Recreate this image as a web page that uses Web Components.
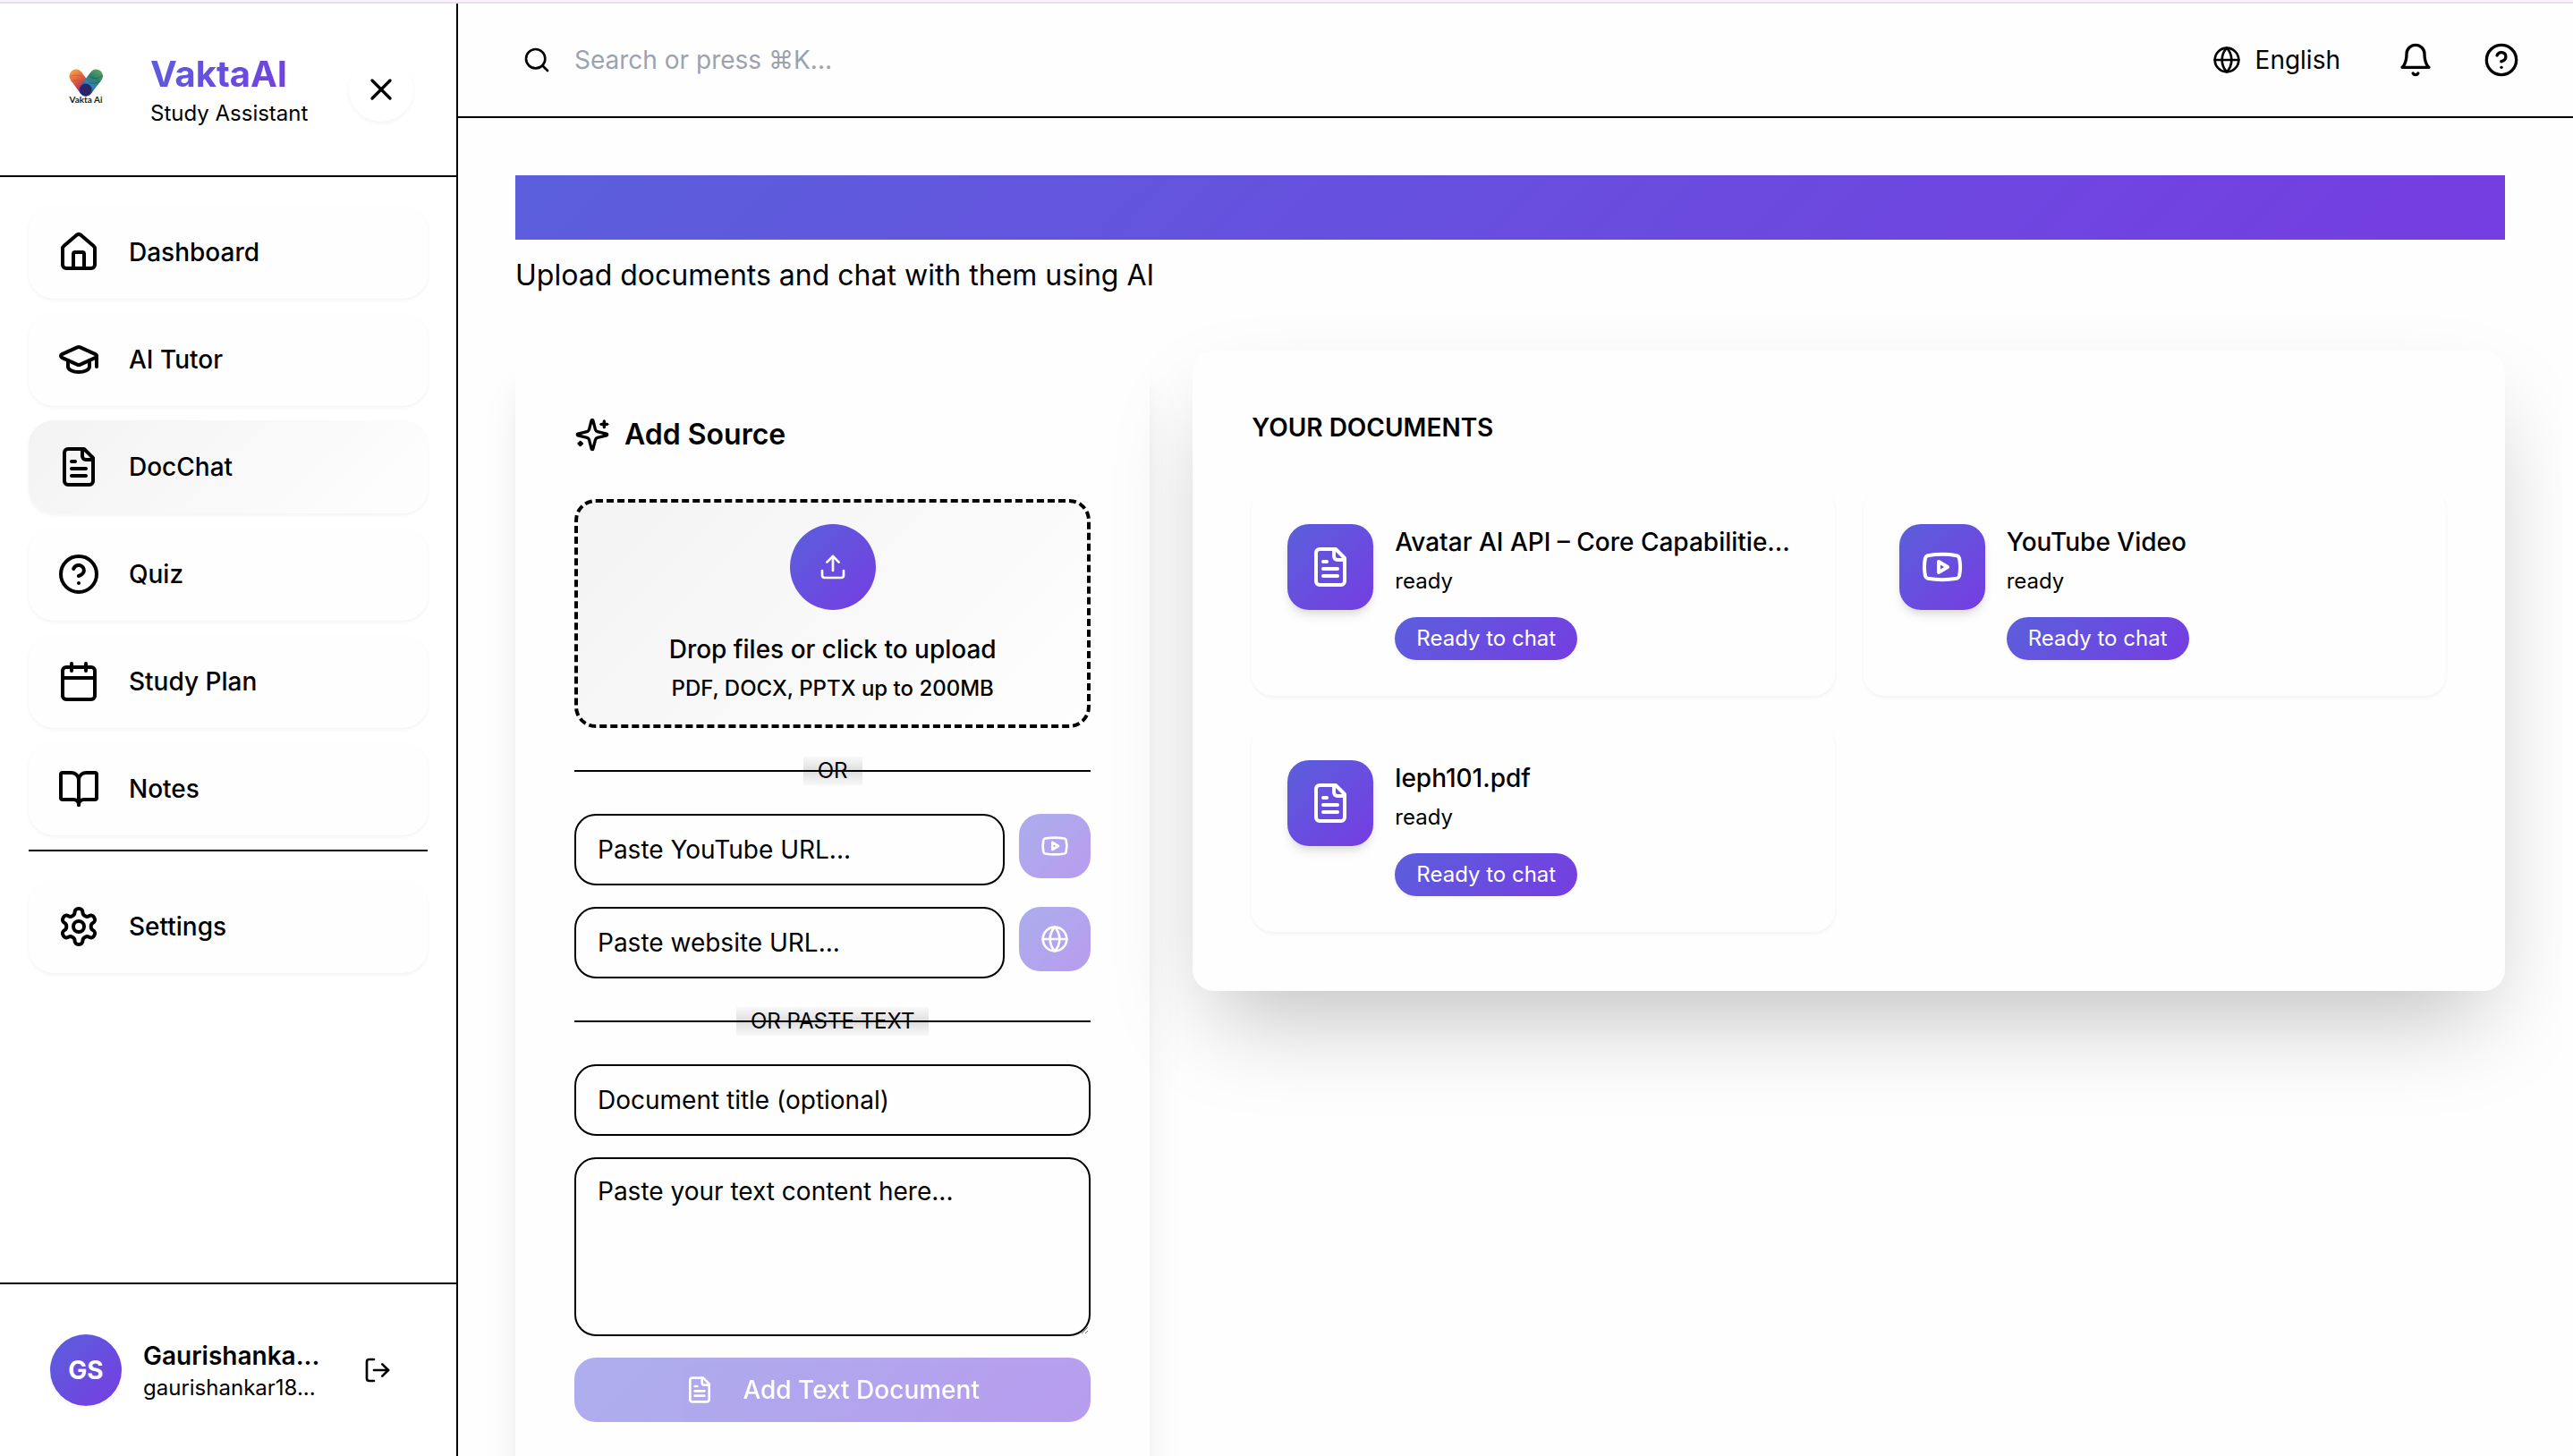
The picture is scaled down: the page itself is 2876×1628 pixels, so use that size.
<!DOCTYPE html>
<html lang="en">
<head>
<meta charset="utf-8">
<title>VaktaAI – DocChat</title>
<style>
  html, body { height: 100%; }
  body {
    margin: 0;
    overflow: hidden;
    font-family: Inter, "Liberation Sans", sans-serif;
    font-size: 28px;
    line-height: 40px;
    color: #000;
    background: #fefefe;
    --line: #000;
    --brand: linear-gradient(135deg, #5b5fdc, #753de1);
    --shade: linear-gradient(135deg, #f3f3f3, #fefefe);
    --surface: #fefefe;
    --radius: 24px;
    --shadow-sm: 0 2px 4px rgba(0, 0, 0, .05);
    --shadow-md: 0 8px 12px -2px rgba(0, 0, 0, .1), 0 4px 8px -4px rgba(0, 0, 0, .1);
    --shadow-xl: 0 40px 50px -10px rgba(0, 0, 0, .1), 0 16px 20px -12px rgba(0, 0, 0, .1);
    --shadow-2xl: 0 50px 100px -24px rgba(0, 0, 0, .25);
  }
</style>
</head>
<body>
<app-shell>
  <app-sidebar slot="sidebar">
    <nav-item icon="home">Dashboard</nav-item>
    <nav-item icon="cap">AI Tutor</nav-item>
    <nav-item icon="file" active>DocChat</nav-item>
    <nav-item icon="help">Quiz</nav-item>
    <nav-item icon="calendar">Study Plan</nav-item>
    <nav-item icon="book">Notes</nav-item>
    <nav-item icon="settings" slot="secondary">Settings</nav-item>
    <user-card slot="footer" initials="GS">
      <span slot="name">Gaurishanka...</span>
      <span slot="email">gaurishankar18...</span>
    </user-card>
  </app-sidebar>
  <top-bar slot="topbar"></top-bar>
  <doc-chat-page>
    <add-source slot="aside"></add-source>
    <doc-list>
      <doc-card icon="file">Avatar AI API – Core Capabilitie...</doc-card>
      <doc-card icon="youtube">YouTube Video</doc-card>
      <doc-card icon="file">leph101.pdf</doc-card>
    </doc-list>
  </doc-chat-page>
</app-shell>

<script>
const ICONS = {
  home: '<path d="M15 21v-8a1 1 0 0 0-1-1h-4a1 1 0 0 0-1 1v8"/><path d="M3 10a2 2 0 0 1 .709-1.528l7-5.999a2 2 0 0 1 2.582 0l7 5.999A2 2 0 0 1 21 10v9a2 2 0 0 1-2 2H5a2 2 0 0 1-2-2z"/>',
  cap: '<path d="M21.42 10.922a1 1 0 0 0-.019-1.838L12.83 5.18a2 2 0 0 0-1.66 0L2.6 9.08a1 1 0 0 0 0 1.832l8.57 3.908a2 2 0 0 0 1.66 0z"/><path d="M22 10v6"/><path d="M6 12.5V16a6 3 0 0 0 12 0v-3.5"/>',
  file: '<path d="M15 2H6a2 2 0 0 0-2 2v16a2 2 0 0 0 2 2h12a2 2 0 0 0 2-2V7Z"/><path d="M14 2v4a2 2 0 0 0 2 2h4"/><path d="M10 9H8"/><path d="M16 13H8"/><path d="M16 17H8"/>',
  help: '<circle cx="12" cy="12" r="10"/><path d="M9.09 9a3 3 0 0 1 5.83 1c0 2-3 3-3 3"/><path d="M12 17h.01"/>',
  calendar: '<path d="M8 2v4"/><path d="M16 2v4"/><rect width="18" height="18" x="3" y="4" rx="2"/><path d="M3 10h18"/>',
  book: '<path d="M12 7v14"/><path d="M3 18a1 1 0 0 1-1-1V4a1 1 0 0 1 1-1h5a4 4 0 0 1 4 4 4 4 0 0 1 4-4h5a1 1 0 0 1 1 1v13a1 1 0 0 1-1 1h-6a3 3 0 0 0-3 3 3 3 0 0 0-3-3z"/>',
  settings: '<path d="M12.22 2h-.44a2 2 0 0 0-2 2v.18a2 2 0 0 1-1 1.73l-.43.25a2 2 0 0 1-2 0l-.15-.08a2 2 0 0 0-2.73.73l-.22.38a2 2 0 0 0 .73 2.73l.15.1a2 2 0 0 1 1 1.72v.51a2 2 0 0 1-1 1.74l-.15.09a2 2 0 0 0-.73 2.73l.22.38a2 2 0 0 0 2.73.73l.15-.08a2 2 0 0 1 2 0l.43.25a2 2 0 0 1 1 1.73V20a2 2 0 0 0 2 2h.44a2 2 0 0 0 2-2v-.18a2 2 0 0 1 1-1.73l.43-.25a2 2 0 0 1 2 0l.15.08a2 2 0 0 0 2.73-.73l.22-.39a2 2 0 0 0-.73-2.73l-.15-.08a2 2 0 0 1-1-1.74v-.5a2 2 0 0 1 1-1.74l.15-.09a2 2 0 0 0 .73-2.73l-.22-.38a2 2 0 0 0-2.73-.73l-.15.08a2 2 0 0 1-2 0l-.43-.25a2 2 0 0 1-1-1.73V4a2 2 0 0 0-2-2z"/><circle cx="12" cy="12" r="3"/>',
  search: '<circle cx="11" cy="11" r="8"/><path d="m21 21-4.3-4.3"/>',
  globe: '<circle cx="12" cy="12" r="10"/><path d="M12 2a14.5 14.5 0 0 0 0 20 14.5 14.5 0 0 0 0-20"/><path d="M2 12h20"/>',
  bell: '<path d="M6 8a6 6 0 0 1 12 0c0 7 3 9 3 9H3s3-2 3-9"/><path d="M10.3 21a1.94 1.94 0 0 0 3.4 0"/>',
  close: '<path d="M18 6 6 18"/><path d="m6 6 12 12"/>',
  logout: '<path d="M9 21H5a2 2 0 0 1-2-2V5a2 2 0 0 1 2-2h4"/><path d="m16 17 5-5-5-5"/><path d="M21 12H9"/>',
  sparkles: '<path d="M9.937 15.5A2 2 0 0 0 8.5 14.063l-6.135-1.582a.5.5 0 0 1 0-.962L8.5 9.936A2 2 0 0 0 9.937 8.5l1.582-6.135a.5.5 0 0 1 .963 0L14.063 8.5A2 2 0 0 0 15.5 9.937l6.135 1.581a.5.5 0 0 1 0 .964L15.5 14.063a2 2 0 0 0-1.437 1.437l-1.582 6.135a.5.5 0 0 1-.963 0z"/><path d="M20 3v4"/><path d="M22 5h-4"/><path d="M4 17v2"/><path d="M5 18H3"/>',
  upload: '<path d="M21 15v4a2 2 0 0 1-2 2H5a2 2 0 0 1-2-2v-4"/><path d="m17 8-5-5-5 5"/><path d="M12 3v12"/>',
  youtube: '<path d="M2.5 17a24.12 24.12 0 0 1 0-10 2 2 0 0 1 1.4-1.4 49.56 49.56 0 0 1 16.2 0A2 2 0 0 1 21.5 7a24.12 24.12 0 0 1 0 10 2 2 0 0 1-1.4 1.4 49.55 49.55 0 0 1-16.2 0A2 2 0 0 1 2.5 17"/><path d="m10 15 5-3-5-3z"/>'
};

const BASE = `
  :host, *, *::before, *::after { box-sizing: border-box; }
  h1, h2, p { margin: 0; font-size: inherit; }
  button, input, textarea { font: inherit; color: inherit; margin: 0; }
  button { border: 0; padding: 0; background: none; display: flex; align-items: center; justify-content: center; cursor: pointer; }
  a { color: inherit; text-decoration: none; }
`;

class Base extends HTMLElement {
  connectedCallback() {
    if (this.shadowRoot) return;
    this.attachShadow({ mode: "open" }).innerHTML = `<style>${BASE}${this.css()}</style>${this.html()}`;
  }
}

/* Line icon on a 24-unit grid; --size sets its edge */
customElements.define("ui-icon", class extends Base {
  css() { return `
    :host { display: block; flex: none; width: var(--size, 32px); height: var(--size, 32px); }
    svg { display: block; width: 100%; height: 100%; fill: none; stroke: currentColor; stroke-width: 2; stroke-linecap: round; stroke-linejoin: round; }`; }
  html() { return `<svg viewBox="0 0 24 24" aria-hidden="true">${ICONS[this.getAttribute("name")]}</svg>`; }
});

customElements.define("app-shell", class extends Base {
  css() { return `
    :host { display: flex; flex-direction: column; height: 100vh; }
    .strip { flex: none; height: 4px; background: #faf2fd; border-bottom: 2px solid #e6e0ec; }
    .body { flex: 1; min-height: 0; display: flex; }
    .side { flex: none; width: 512px; border-right: 2px solid var(--line); display: flex; }
    .content { flex: 1; min-width: 0; display: flex; flex-direction: column; }
    main { flex: 1; min-height: 0; overflow: hidden; margin-right: 12px; }`; }
  html() { return `
    <div class="strip"></div>
    <div class="body">
      <aside class="side"><slot name="sidebar"></slot></aside>
      <div class="content"><slot name="topbar"></slot><main><slot></slot></main></div>
    </div>`; }
});

customElements.define("brand-logo", class extends Base {
  css() { return `
    :host { display: block; flex: none; width: 96px; height: 96px; }
    svg { display: block; width: 100%; height: 100%; }
    text { font: 700 10px Lato, sans-serif; fill: #1c1c1c; }`; }
  html() { return `
    <svg viewBox="0 0 96 96" role="img" aria-label="Vakta Ai">
      <defs>
        <linearGradient id="l" x1="32" y1="26" x2="50" y2="54" gradientUnits="userSpaceOnUse">
          <stop offset="0" stop-color="#f0a94e"/><stop offset=".35" stop-color="#e2663a"/>
          <stop offset=".65" stop-color="#b93a5c"/><stop offset="1" stop-color="#33246f"/>
        </linearGradient>
        <linearGradient id="r" x1="64" y1="26" x2="46" y2="54" gradientUnits="userSpaceOnUse">
          <stop offset="0" stop-color="#5ba65a"/><stop offset=".35" stop-color="#2f7f6d"/>
          <stop offset=".6" stop-color="#2f86b5"/><stop offset="1" stop-color="#2a2a78"/>
        </linearGradient>
      </defs>
      <path d="M37 33 48 48" fill="none" stroke="url(#l)" stroke-width="15" stroke-linecap="round"/>
      <path d="M59.500 33 48 48" fill="none" stroke="url(#r)" stroke-width="15" stroke-linecap="round"/>
      <circle cx="48" cy="48" r="6.500" fill="#2a2468"/>
      <path d="M30 34q7-4 14 0M31 39q7-3 15 1" fill="none" stroke="#c9432f" stroke-opacity=".5"/>
      <path d="M53 34q7 4 14-2M51 40q6 3 13-1" fill="none" stroke="#1c5a4c" stroke-opacity=".6"/>
      <text x="48" y="63" text-anchor="middle">Vakta Ai</text>
    </svg>`; }
});

customElements.define("app-sidebar", class extends Base {
  css() { return `
    :host { display: flex; flex: 1; min-width: 0; flex-direction: column; background: #fff; }
    header { display: flex; align-items: center; padding: 48px; border-bottom: 2px solid var(--line); }
    .brand { flex: 1; min-width: 0; padding: 0 0 2px 24px; }
    .name { width: max-content; font-size: 40px; line-height: 56px; font-weight: 700; background: var(--brand); -webkit-background-clip: text; background-clip: text; color: transparent; }
    .tag { font-size: 24px; line-height: 32px; }
    .close { flex: none; width: 72px; height: 72px; border-radius: 50%; box-shadow: var(--shadow-sm); --size: 40px; }
    nav { flex: 1; display: flex; flex-direction: column; gap: 16px; padding: 32px; }
    .secondary { border-top: 2px solid var(--line); padding-top: 32px; }
    footer { border-top: 2px solid var(--line); }`; }
  html() { return `
    <header>
      <brand-logo></brand-logo>
      <div class="brand"><h1 class="name">VaktaAI</h1><p class="tag">Study Assistant</p></div>
      <button class="close" aria-label="Close sidebar"><ui-icon name="close"></ui-icon></button>
    </header>
    <nav><slot></slot><div class="secondary"><slot name="secondary"></slot></div></nav>
    <footer><slot name="footer"></slot></footer>`; }
});

customElements.define("nav-item", class extends Base {
  css() { return `
    :host { display: block; }
    a { display: flex; align-items: center; gap: 32px; padding: 0 32px; height: 104px; border-radius: 28px; font-weight: 500; background: var(--surface); box-shadow: var(--shadow-sm); --size: 48px; }
    :host([active]) a { background: var(--shade); }`; }
  html() { return `<a href="#"><ui-icon name="${this.getAttribute("icon")}"></ui-icon><slot></slot></a>`; }
});

customElements.define("user-card", class extends Base {
  css() { return `
    :host { display: flex; align-items: center; gap: 24px; padding: 56px; }
    .avatar { flex: none; width: 80px; height: 80px; border-radius: 50%; display: grid; place-items: center; background: var(--brand); color: #fff; font-weight: 700; box-shadow: var(--shadow-sm); }
    .who { flex: 1; min-width: 0; white-space: nowrap; }
    .name { font-weight: 600; }
    .email { font-size: 24px; line-height: 32px; }
    button { width: 64px; height: 64px; }`; }
  html() { return `
    <div class="avatar">${this.getAttribute("initials")}</div>
    <div class="who"><p class="name"><slot name="name"></slot></p><p class="email"><slot name="email"></slot></p></div>
    <button aria-label="Log out"><ui-icon name="logout"></ui-icon></button>`; }
});

customElements.define("top-bar", class extends Base {
  css() { return `
    :host { display: flex; align-items: center; gap: 16px; height: 128px; flex: none; padding: 0 40px 0 72px; border-bottom: 2px solid var(--line); }
    .search { flex: 1; display: flex; align-items: center; gap: 24px; }
    input { flex: 1; min-width: 0; border: 0; padding: 0 2px; outline: 0; background: none; height: 56px; }
    input::placeholder { color: #9ca3af; opacity: 1; }
    .lang { gap: 16px; padding: 0 28px; height: 72px; }
    .round { width: 80px; height: 80px; --size: 40px; }`; }
  html() { return `
    <label class="search"><ui-icon name="search"></ui-icon><input type="search" aria-label="Search" placeholder="Search or press ⌘K..."></label>
    <button class="lang"><ui-icon name="globe"></ui-icon>English</button>
    <button class="round" aria-label="Notifications"><ui-icon name="bell"></ui-icon></button>
    <button class="round" aria-label="Help"><ui-icon name="help"></ui-icon></button>`; }
});

customElements.define("doc-chat-page", class extends Base {
  css() { return `
    :host { display: block; padding: 64px; }
    .banner { height: 72px; background: var(--brand); }
    .lead { font-size: 32px; line-height: 48px; margin: 16px 0 60px; }
    .columns { display: grid; grid-template-columns: repeat(3, minmax(0, 1fr)); gap: 48px; align-items: start; }
    .wide { grid-column: span 2; }`; }
  html() { return `
    <div class="banner"></div>
    <p class="lead">Upload documents and chat with them using AI</p>
    <div class="columns"><slot name="aside"></slot><div class="wide"><slot></slot></div></div>`; }
});

customElements.define("or-divider", class extends Base {
  css() { return `
    :host { display: grid; align-items: center; justify-items: center; font-size: 24px; line-height: 32px; }
    span, i { grid-area: 1 / 1; }
    span { padding: 0 16px; background: linear-gradient(#f8f8f8, #ececec 25%, #dcdcdc 50%, #ececec 75%, #f8f8f8); }
    i { width: 100%; height: 2px; background: var(--line); }`; }
  html() { return `<span><slot></slot></span><i></i>`; }
});

customElements.define("add-source", class extends Base {
  css() { return `
    :host { display: flex; flex-direction: column; gap: 24px; padding: 66px; border-radius: var(--radius); background: var(--surface); box-shadow: var(--shadow-xl); }
    h2 { display: flex; align-items: center; gap: 16px; font-size: 32px; line-height: 56px; font-weight: 600; margin-bottom: 20px; --size: 40px; }
    .drop { display: flex; flex-direction: column; align-items: center; padding: 24px; border: 4px dashed var(--line); border-radius: var(--radius); background: var(--shade); font-weight: 500; }
    .bubble { width: 96px; height: 96px; margin-bottom: 24px; border-radius: 50%; background: var(--brand); color: #fff; display: grid; place-items: center; }
    .hint { font-size: 24px; line-height: 32px; margin-top: 8px; }
    or-divider { margin: 8px 0; }
    .row { display: flex; align-items: flex-start; gap: 16px; }
    input, textarea { display: block; width: 100%; min-width: 0; border: 2px solid var(--line); border-radius: var(--radius); background: var(--surface); padding: 16px 24px; outline: 0; }
    input { height: 80px; padding-block: 0; }
    textarea { height: 200px; resize: vertical; }
    ::placeholder { color: #000; opacity: 1; }
    .go { flex: none; height: 72px; border-radius: var(--radius); background: var(--brand); color: #fff; opacity: .5; font-weight: 500; gap: 32px; }
    .row .go { width: 80px; }`; }
  html() { return `
    <h2><ui-icon name="sparkles"></ui-icon>Add Source</h2>
    <button class="drop">
      <span class="bubble"><ui-icon name="upload"></ui-icon></span>
      <span>Drop files or click to upload</span>
      <span class="hint">PDF, DOCX, PPTX up to 200MB</span>
    </button>
    <or-divider>OR</or-divider>
    <div class="row"><input type="url" aria-label="YouTube URL" placeholder="Paste YouTube URL..."><button class="go" disabled aria-label="Add YouTube video"><ui-icon name="youtube"></ui-icon></button></div>
    <div class="row"><input type="url" aria-label="Website URL" placeholder="Paste website URL..."><button class="go" disabled aria-label="Add website"><ui-icon name="globe"></ui-icon></button></div>
    <or-divider>OR PASTE TEXT</or-divider>
    <input type="text" aria-label="Document title" placeholder="Document title (optional)">
    <textarea aria-label="Text content" placeholder="Paste your text content here..."></textarea>
    <button class="go" disabled><ui-icon name="file"></ui-icon>Add Text Document</button>`; }
});

customElements.define("doc-list", class extends Base {
  css() { return `
    :host { display: block; padding: 66px; border-radius: var(--radius); background: var(--surface); box-shadow: var(--shadow-2xl); }
    h2 { font-weight: 600; margin-bottom: 48px; }
    .grid { display: grid; grid-template-columns: repeat(2, minmax(0, 1fr)); gap: 32px; }`; }
  html() { return `<h2>YOUR DOCUMENTS</h2><div class="grid"><slot></slot></div>`; }
});

customElements.define("doc-card", class extends Base {
  css() { return `
    :host { display: flex; align-items: flex-start; gap: 24px; padding: 40px; border-radius: var(--radius); box-shadow: var(--shadow-sm); }
    .tile { flex: none; width: 96px; height: 96px; display: grid; place-items: center; border-radius: var(--radius); background: var(--brand); color: #fff; box-shadow: var(--shadow-md); --size: 48px; }
    .text { flex: 1; min-width: 0; font-size: 24px; line-height: 32px; }
    .title { font-size: 28px; line-height: 40px; font-weight: 500; margin-bottom: 8px; white-space: nowrap; }
    .badge { width: max-content; margin-top: 24px; padding: 8px 24px; border-radius: var(--radius); background: var(--brand); color: #fff; box-shadow: var(--shadow-sm); }`; }
  html() { return `
    <div class="tile"><ui-icon name="${this.getAttribute("icon")}"></ui-icon></div>
    <div class="text"><p class="title"><slot></slot></p><p>ready</p><p class="badge">Ready to chat</p></div>`; }
});
</script>
</body>
</html>
